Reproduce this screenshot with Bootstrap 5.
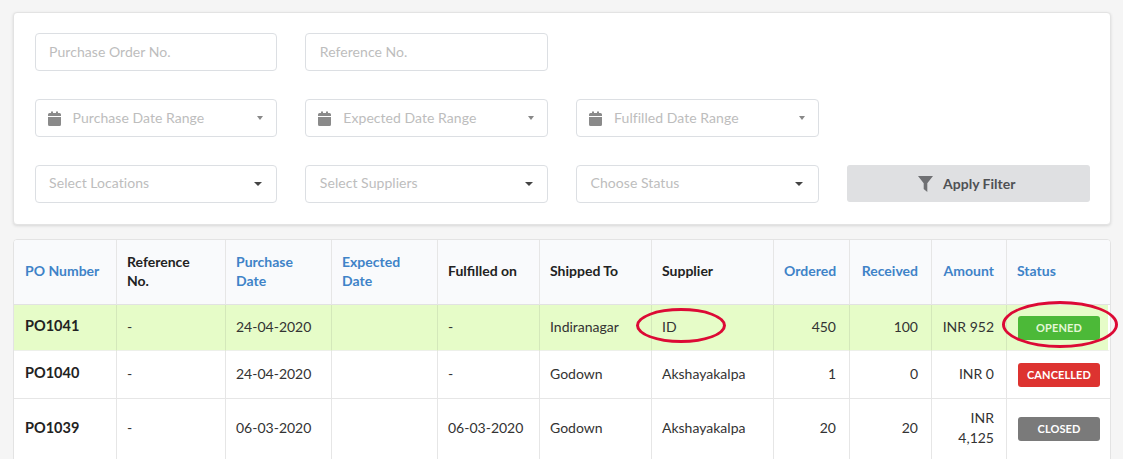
<!DOCTYPE html>
<html lang="en">
<head>
<meta charset="utf-8">
<title>Purchase Orders</title>
<link href="https://cdn.jsdelivr.net/npm/bootstrap@5.3.0/dist/css/bootstrap.min.css" rel="stylesheet">
<style>
html,body{height:459px;overflow:hidden}
body{background:#f5f5f5;font-family:"Lato","Liberation Sans",sans-serif;color:#333;font-size:14px}
.page-wrap{padding:12px 12px 0 13px;position:relative}
.filter-panel{background:#fff;border:1px solid #e3e3e3;border-radius:4px;box-shadow:0 1px 3px rgba(0,0,0,.12);padding:20px 20.4px 21px 20.6px;margin-bottom:14px}
.filter-grid{display:grid;grid-template-columns:repeat(4,1fr);column-gap:28px;row-gap:28px}
.fake-field{height:38px;border:1px solid #dcdfe3;border-radius:4px;background:#fff;color:#bdbdbd;font-size:14px;display:flex;align-items:center;padding:0 14.500px 0 13.500px;letter-spacing:.05px}
.fake-field .lbl{flex:1;margin-bottom:2px}
.select-field .lbl{margin-bottom:4px}
.date-field{padding:0 13px 0 12px}
.date-field svg{margin-right:12px;flex:none}
.caret-s{width:0;height:0;border-left:3.500px solid transparent;border-right:3.500px solid transparent;border-top:4px solid #888;flex:none}
.caret-d{width:0;height:0;border-left:4px solid transparent;border-right:4px solid transparent;border-top:4px solid #444;flex:none}
.apply-btn{height:37px;background:#dfe0e2;border:0;border-radius:3px;color:#4f5154;font-weight:700;font-size:14px;display:flex;align-items:center;justify-content:center;gap:10px;padding:0 15px 0 12px}
.table-panel{background:#fff;border:1px solid #e3e3e3;border-radius:4px 4px 0 0;overflow:hidden}
.po-table{table-layout:fixed;width:100%;border-collapse:separate;border-spacing:0;margin:0;font-size:14px;color:#333}
.po-table th,.po-table td{border:solid #e6e6e6;border-width:0 1px 1px 0;padding:0 11px 0 10px;vertical-align:middle;line-height:20px;font-weight:400;background:transparent;box-shadow:none}
.po-table th:first-child,.po-table td:first-child{padding-left:11px}
.po-table th:last-child,.po-table td:last-child{border-right:0}
.po-table tbody td:last-child{padding-left:11px}
.po-table thead th{background:#f9fafc;font-weight:700;height:65px;color:#222;border-bottom-color:#e2e2e2;line-height:19.500px;padding-bottom:2px}
.po-table thead th.sortable{color:#3f83c8}
.po-table tbody td:not(:last-child){padding-bottom:2px}
.po-table .num{text-align:right;padding-right:13px}
.po-table .amt{padding-right:12px}
.po-table tbody td.po{font-weight:700;font-size:14.500px;color:#222;padding-bottom:3px}
.po-table .row-open td{background:#e6fcc8;height:46px;border-bottom-color:#edf0ea;border-right-color:#d4e8ba}
.po-table .row-open td:last-child{border-right:2px solid #fff}
.row-mid td{height:48px}
.po-table .row-tall td{height:60px;border-bottom:0}
.status-pill{display:block;width:82px;height:24px;border-radius:3px;color:#fff;font-size:11px;font-weight:700;line-height:24px;text-align:center;letter-spacing:.1px}
.pill-open{background:#4cb938;color:#e4f7d6}
.pill-cancel{background:#dd3330}
.pill-closed{background:#7a7a7a}
.note-ring{position:absolute;border:3px solid #dc0a35;border-radius:50%;pointer-events:none}
.ring-id{left:636px;top:308px;width:90px;height:35px}
.ring-status{left:1002px;top:301px;width:116px;height:47px}
</style>
</head>
<body>
<div class="page-wrap">
  <div class="filter-panel">
    <div class="filter-grid">
      <div class="fake-field"><span class="lbl">Purchase Order No.</span></div>
      <div class="fake-field"><span class="lbl">Reference No.</span></div>
      <div></div><div></div>

      <div class="fake-field date-field"><svg width="13" height="15" viewBox="0 0 13 15"><path fill="#8a8a8a" d="M0 6h13v7.500A1.500 1.500 0 0 1 11.500 15h-10A1.500 1.500 0 0 1 0 13.500zM1.500 2H3V.5h2V2h3V.5h2V2h1.500A1.500 1.500 0 0 1 13 3.500V5H0V3.500A1.500 1.500 0 0 1 1.500 2z"/></svg><span class="lbl">Purchase Date Range</span><span class="caret-s"></span></div>
      <div class="fake-field date-field"><svg width="13" height="15" viewBox="0 0 13 15"><path fill="#8a8a8a" d="M0 6h13v7.500A1.500 1.500 0 0 1 11.500 15h-10A1.500 1.500 0 0 1 0 13.500zM1.500 2H3V.5h2V2h3V.5h2V2h1.500A1.500 1.500 0 0 1 13 3.500V5H0V3.500A1.500 1.500 0 0 1 1.500 2z"/></svg><span class="lbl">Expected Date Range</span><span class="caret-s"></span></div>
      <div class="fake-field date-field"><svg width="13" height="15" viewBox="0 0 13 15"><path fill="#8a8a8a" d="M0 6h13v7.500A1.500 1.500 0 0 1 11.500 15h-10A1.500 1.500 0 0 1 0 13.500zM1.500 2H3V.5h2V2h3V.5h2V2h1.500A1.500 1.500 0 0 1 13 3.500V5H0V3.500A1.500 1.500 0 0 1 1.500 2z"/></svg><span class="lbl">Fulfilled Date Range</span><span class="caret-s"></span></div>
      <div></div>

      <div class="fake-field select-field"><span class="lbl">Select Locations</span><span class="caret-d"></span></div>
      <div class="fake-field select-field"><span class="lbl">Select Suppliers</span><span class="caret-d"></span></div>
      <div class="fake-field select-field"><span class="lbl">Choose Status</span><span class="caret-d"></span></div>
      <button type="button" class="btn apply-btn"><svg width="15" height="16" viewBox="0 0 15 16"><path fill="#6f7073" d="M0 0h15L9.300 7.200V16L5.700 13V7.200z"/></svg>Apply Filter</button>
    </div>
  </div>

  <div class="table-panel">
    <table class="table po-table">
      <colgroup>
        <col style="width:103px"><col style="width:109px"><col style="width:106px"><col style="width:106px"><col style="width:102px"><col style="width:112px"><col style="width:122px"><col style="width:76px"><col style="width:82px"><col style="width:75px"><col>
      </colgroup>
      <thead>
        <tr>
          <th class="sortable">PO Number</th><th>Reference No.</th><th class="sortable">Purchase Date</th><th class="sortable">Expected Date</th><th>Fulfilled on</th><th>Shipped To</th><th>Supplier</th><th class="sortable num">Ordered</th><th class="sortable num">Received</th><th class="sortable num amt">Amount</th><th class="sortable">Status</th>
        </tr>
      </thead>
      <tbody>
        <tr class="row-open"><td class="po">PO1041</td><td>-</td><td>24-04-2020</td><td></td><td>-</td><td>Indiranagar</td><td>ID</td><td class="num">450</td><td class="num">100</td><td class="num amt">INR 952</td><td><span class="status-pill pill-open">OPENED</span></td></tr>
        <tr class="row-mid"><td class="po">PO1040</td><td>-</td><td>24-04-2020</td><td></td><td>-</td><td>Godown</td><td>Akshayakalpa</td><td class="num">1</td><td class="num">0</td><td class="num amt">INR 0</td><td><span class="status-pill pill-cancel">CANCELLED</span></td></tr>
        <tr class="row-tall"><td class="po">PO1039</td><td>-</td><td>06-03-2020</td><td></td><td>06-03-2020</td><td>Godown</td><td>Akshayakalpa</td><td class="num">20</td><td class="num">20</td><td class="num amt">INR 4,125</td><td><span class="status-pill pill-closed">CLOSED</span></td></tr>
      </tbody>
    </table>
  </div>
  <div class="note-ring ring-id"></div>
  <div class="note-ring ring-status"></div>
</div>
<script src="https://cdn.jsdelivr.net/npm/bootstrap@5.3.0/dist/js/bootstrap.bundle.min.js"></script>
</body>
</html>
